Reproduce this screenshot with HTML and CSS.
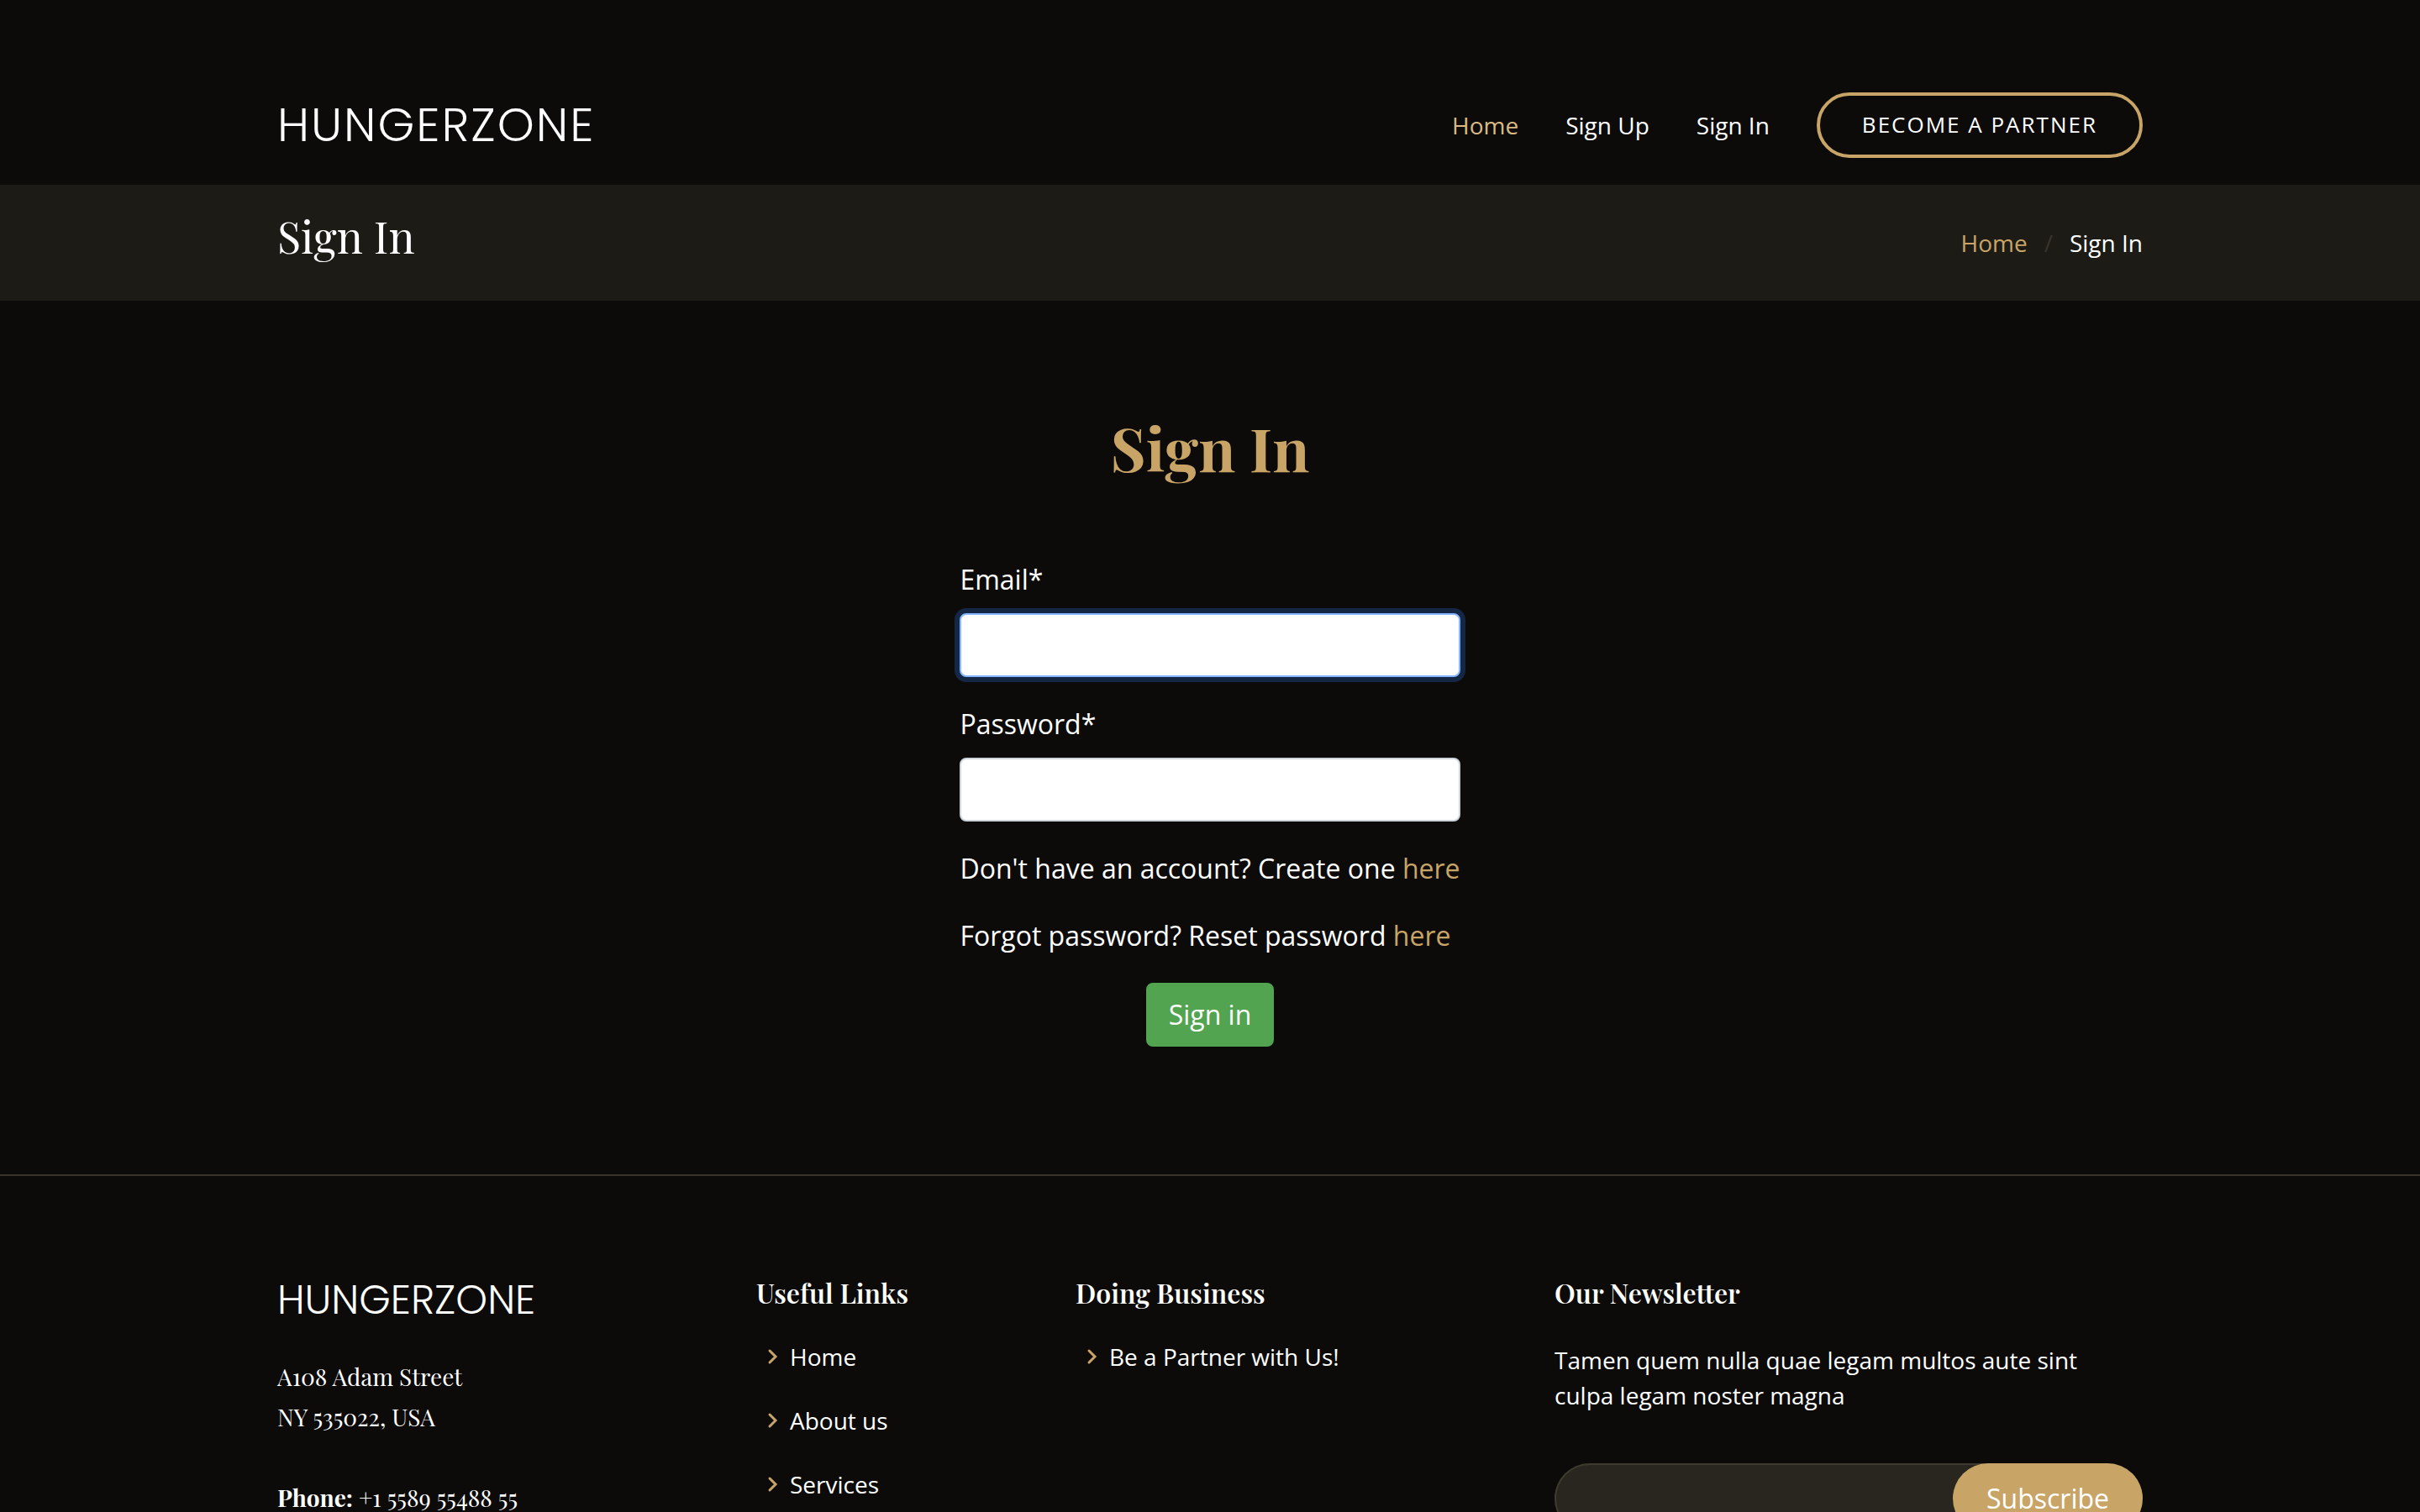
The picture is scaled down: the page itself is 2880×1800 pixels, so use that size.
FILE: index.html
```html
<!DOCTYPE html>
<html lang="en">
<head>
<meta charset="utf-8">
<meta name="viewport" content="width=device-width, initial-scale=1">
<title>Sign In - HUNGERZONE</title>
<link rel="stylesheet" href="styles.css">
</head>
<body>
<header class="header">
  <div class="container header-row">
    <a class="logo" href="#">HUNGERZONE</a>
    <nav class="nav">
      <a class="nav-link active" href="#">Home</a>
      <a class="nav-link" href="#">Sign Up</a>
      <a class="nav-link" href="#">Sign In</a>
      <a class="partner" href="#">Become a Partner</a>
    </nav>
  </div>
</header>
<main>
  <section class="band">
    <div class="container band-row">
      <h2 class="band-title">Sign In</h2>
      <ol class="crumbs">
        <li><a href="#">Home</a></li>
        <li>Sign In</li>
      </ol>
    </div>
  </section>
  <section class="signin">
    <h1 class="title">Sign In</h1>
    <form class="form">
      <label for="email">Email*</label>
      <input class="field focused" id="email" type="email">
      <label for="password">Password*</label>
      <input class="field" id="password" type="password">
      <p>Don't have an account? Create one <a href="#">here</a></p>
      <p>Forgot password? Reset password <a href="#">here</a></p>
      <button class="submit" type="submit">Sign in</button>
    </form>
  </section>
</main>
<footer class="footer">
  <div class="footer-grid">
    <div class="col">
      <h3 class="footer-logo">HUNGERZONE</h3>
      <p class="address">A108 Adam Street<br>NY 535022, USA<br><br><strong>Phone:</strong> +1 5589 55488 55</p>
    </div>
    <div class="col">
      <h4>Useful Links</h4>
      <ul class="links">
        <li><svg class="chevron" viewBox="0 0 24 24" aria-hidden="true"><path d="M8 5l7 7-7 7"/></svg><a href="#">Home</a></li>
        <li><svg class="chevron" viewBox="0 0 24 24" aria-hidden="true"><path d="M8 5l7 7-7 7"/></svg><a href="#">About us</a></li>
        <li><svg class="chevron" viewBox="0 0 24 24" aria-hidden="true"><path d="M8 5l7 7-7 7"/></svg><a href="#">Services</a></li>
      </ul>
    </div>
    <div class="col">
      <h4>Doing Business</h4>
      <ul class="links">
        <li><svg class="chevron" viewBox="0 0 24 24" aria-hidden="true"><path d="M8 5l7 7-7 7"/></svg><a href="#">Be a Partner with Us!</a></li>
      </ul>
    </div>
    <div class="col">
      <h4>Our Newsletter</h4>
      <p class="news">Tamen quem nulla quae legam multos aute sint culpa legam noster magna</p>
      <form class="subscribe">
        <input type="email" aria-label="Email address">
        <button type="submit">Subscribe</button>
      </form>
    </div>
  </div>
</footer>
</body>
</html>
```
FILE: styles.css
```css
* { box-sizing: border-box; }
body {
  margin: 0;
  height: 100vh;
  overflow: hidden;
  background: #0c0b09;
  color: #fff;
  font: 32px/48px "Open Sans", sans-serif;
}
h1, h2, h3, h4, p, ol, ul { margin: 0; padding: 0; font-weight: 400; }
ol, ul { list-style: none; }
a { color: #c8a467; text-decoration: none; }
input, button { font: inherit; }

.container { max-width: 2280px; margin: 0 auto; padding: 0 30px; }

.header { padding: 110px 0 32px; }
.header-row { display: flex; justify-content: space-between; align-items: center; }
.logo, .footer-logo { font-family: "Poppins", "Lato", sans-serif; font-weight: 300; color: #fff; }
.logo { font-size: 56px; line-height: 76px; letter-spacing: 2px; }
.nav { display: flex; align-items: center; gap: 56px; }
.nav-link { font-size: 28px; line-height: 42px; color: #fff; }
.nav-link.active { color: #d9ba85; }
.partner {
  padding: 15px 50px 17px;
  border: 4px solid #c8a467;
  border-radius: 50px;
  color: #fff;
  font-size: 26px;
  line-height: 38px;
  letter-spacing: 2px;
  text-transform: uppercase;
}

.band { background: #1d1b16; padding: 26px 0 42px; }
.band-row { display: flex; justify-content: space-between; align-items: center; }
.band-title { font: 400 52px/70px "Playfair Display", "Liberation Serif", serif; }
.crumbs { display: flex; font-size: 28px; line-height: 42px; padding-top: 16px; }
.crumbs li + li::before { content: "/"; padding: 0 20px; color: #37332a; }

.signin { display: flex; flex-direction: column; align-items: center; padding: 118px 0 152px; }
.title { font: 700 72px/112px "Playfair Display", "Liberation Serif", serif; color: #c8a467; margin-bottom: 78px; }
.form { display: flex; flex-direction: column; }
.form label { margin-bottom: 16px; }
.field {
  height: 76px;
  width: 100%;
  margin-bottom: 32px;
  padding: 12px 24px;
  border: 2px solid #ced4da;
  border-radius: 8px;
  background: #fff;
  outline: 0;
}
.field.focused { border-color: #86b7fe; box-shadow: 0 0 0 6px #142744; }
.form p { margin-bottom: 32px; }
.submit {
  align-self: center;
  padding: 12px 25px;
  border: 2px solid #52a450;
  border-radius: 8px;
  background: #52a450;
  color: #fff;
}

.footer { border-top: 2px solid #37332a; padding-top: 119px; }
.footer-grid { display: grid; grid-template-columns: 3fr 2fr 3fr 4fr; max-width: 2280px; margin: 0 auto; }
.col { padding: 0 30px; }
.footer-logo { font-size: 48px; line-height: 58px; margin-bottom: 38px; }
.address { font: 28px/48px "Playfair Display", "Liberation Serif", serif; }
.col h4 { font: 600 32px/40px "Playfair Display", "Liberation Serif", serif; margin-bottom: 35px; }
.links { display: grid; gap: 34px; font-size: 28px; line-height: 42px; }
.links li { display: flex; align-items: center; gap: 8px; padding-left: 8px; }
.links a { color: #fff; }
.chevron { width: 24px; height: 24px; fill: none; stroke: #c8a467; stroke-width: 3; stroke-linecap: round; }
.news { font-size: 28px; line-height: 42px; padding: 4px 40px 0 0; }
.subscribe {
  display: flex;
  margin-top: 60px;
  border-radius: 50px;
  background: #28261f;
  box-shadow: inset 0 0 0 2px #3d3a2f;
}
.subscribe input { flex: 1; min-width: 0; border: 0; background: none; color: #fff; padding: 0 32px; outline: 0; }
.subscribe button { border: 0; border-radius: 50px; background: #c8a467; color: #fff; padding: 18px 40px; }
```
